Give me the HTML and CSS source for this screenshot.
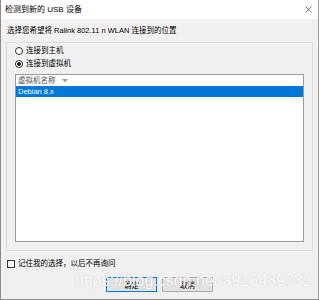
FILE: index.html
```html
<!DOCTYPE html>
<html lang="zh-CN">
<head>
    <meta charset="UTF-8">
    <title>检测到新的 USB 设备</title>
    <link rel="stylesheet" href="styles.css">
</head>
<body>
    <div class="window">
        <div class="titlebar">
            <span class="title">检测到新的 USB 设备</span>
            <svg class="close" width="7" height="7" viewBox="0 0 7 7">
                <path d="M0.5 0.5 L6.5 6.5 M6.5 0.5 L0.5 6.5" stroke="#555" stroke-width="0.8" fill="none"/>
            </svg>
        </div>

        <div class="content">
            <p class="prompt">选择您希望将 Ralink 802.11 n WLAN 连接到的位置</p>

            <div class="group">
                <label class="option"><span class="radio"></span>连接到主机</label>
                <label class="option"><span class="radio checked"></span>连接到虚拟机</label>

                <div class="list">
                    <div class="list-head">
                        虚拟机名称
                        <svg class="sort" width="6" height="4" viewBox="0 0 6 4">
                            <path d="M0 0 L6 0 L3 3.5 Z" fill="#a0a0a0"/>
                        </svg>
                    </div>
                    <div class="list-row selected">Debian 8.x</div>
                </div>
            </div>

            <label class="remember"><span class="checkbox"></span>记住我的选择，以后不再询问</label>

            <div class="buttons">
                <button class="btn primary">确定</button>
                <button class="btn">取消</button>
            </div>
        </div>

        <!-- watermark of the original screenshot, drawn over the buttons -->
        <div class="watermark">https://blog.csdn.net/a916489732</div>
    </div>
</body>
</html>
```

FILE: styles.css
```css
body {
    margin: 0;
    background-color: #f0f0f0;
    font-family: "Liberation Sans", "Noto Sans CJK SC", sans-serif;
    font-size: 7.5px;
    color: #000;
}

.window {
    position: relative;
    width: 319px;
    height: 300px;
    box-sizing: border-box;
    border-left: 1px solid #8c8c8c;
    border-right: 1px solid #9a9a9a;
    border-bottom: 1px solid #8c8c8c;
    display: flex;
    flex-direction: column;
    overflow: hidden;
}

.titlebar {
    height: 19px;
    flex: none;
    background-color: #fff;
    display: flex;
    align-items: center;
    justify-content: space-between;
    padding: 0 6px 0 4px;
}

.title {
    font-size: 8px;
    line-height: 10px;
}

.content {
    flex: 1;
    display: flex;
    flex-direction: column;
    padding: 6px 5px 7px 5px;
    background-color: #f0f0f0;
}

.prompt {
    margin: 0 0 0 1px;
    height: 11px;
    line-height: 11px;
    white-space: nowrap;
}

.group {
    flex: 1;
    margin-top: 6px;
    border: 1px solid #dcdcdc;
    padding: 2px 8px 8px 8px;
    display: flex;
    flex-direction: column;
    gap: 2px;
}

.option {
    height: 11px;
    line-height: 11px;
    display: flex;
    align-items: center;
    gap: 3px;
}

.radio {
    width: 8px;
    height: 8px;
    box-sizing: border-box;
    border: 1px solid #333;
    border-radius: 50%;
    background-color: #fff;
    display: flex;
    align-items: center;
    justify-content: center;
}

.radio.checked::after {
    content: "";
    width: 4px;
    height: 4px;
    border-radius: 50%;
    background-color: #222;
}

.list {
    flex: 1;
    margin-top: 3px;
    border: 1px solid #9a9a9a;
    background-color: #fff;
}

.list-head {
    height: 11px;
    line-height: 11px;
    padding-left: 2px;
    color: #4d4d4d;
    display: flex;
    align-items: center;
    gap: 6px;
}

.list-row {
    height: 11px;
    line-height: 11px;
    padding-left: 2px;
}

.list-row.selected {
    background-color: #0078d7;
    color: #fff;
}

.remember {
    margin: 8px 0 0 1px;
    height: 9px;
    line-height: 9px;
    display: flex;
    align-items: center;
    gap: 3px;
}

.checkbox {
    width: 8px;
    height: 8px;
    box-sizing: border-box;
    border: 1px solid #333;
    background-color: #fff;
}

.buttons {
    margin-top: 9px;
    display: flex;
    justify-content: center;
    gap: 5px;
}

.btn {
    width: 51px;
    height: 15px;
    padding: 0;
    font-family: "Liberation Sans", "Noto Sans CJK SC", sans-serif;
    font-size: 7.5px;
    color: #000;
    background-color: #e1e1e1;
    border: 1px solid #adadad;
}

.btn.primary {
    border-color: #0078d7;
}

.watermark {
    position: absolute;
    left: 74px;
    top: 273px;
    font-family: "Liberation Sans", sans-serif;
    font-size: 16px;
    line-height: 16px;
    color: rgba(255, 255, 255, 0.92);
    text-shadow: 0 0 1px rgba(150, 150, 150, 0.5);
    white-space: nowrap;
    pointer-events: none;
}
```
